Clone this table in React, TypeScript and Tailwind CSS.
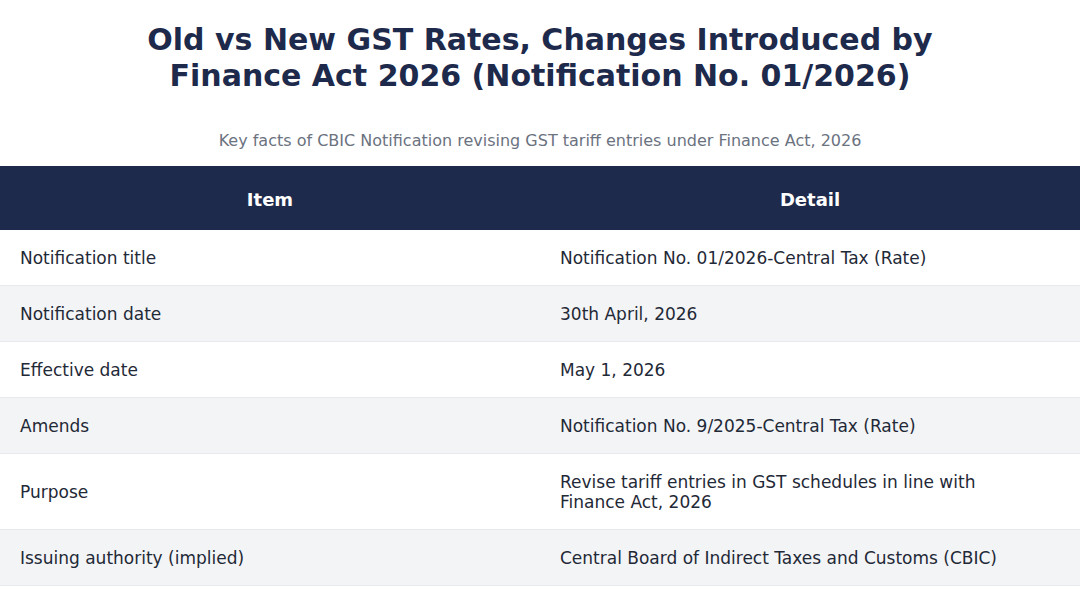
const rows: { item: string; detail: string }[] = [
  { item: "Notification title", detail: "Notification No. 01/2026-Central Tax (Rate)" },
  { item: "Notification date", detail: "30th April, 2026" },
  { item: "Effective date", detail: "May 1, 2026" },
  { item: "Amends", detail: "Notification No. 9/2025-Central Tax (Rate)" },
  { item: "Purpose", detail: "Revise tariff entries in GST schedules in line with Finance Act, 2026" },
  { item: "Issuing authority (implied)", detail: "Central Board of Indirect Taxes and Customs (CBIC)" },
];

export default function App() {
  return (
    <div className="w-[1080px] h-[596px] bg-white overflow-hidden font-['DejaVu_Sans',sans-serif]">
      <h1 className="pt-[22px] px-10 text-center text-[30px] leading-[36px] font-bold text-[#1e2a4b]">
        Old vs New GST Rates, Changes Introduced by
        <br />
        Finance Act 2026 (Notification No. 01/2026)
      </h1>

      <p className="mt-[35px] text-center text-[16px] leading-6 text-[#6b7280]">
        Key facts of CBIC Notification revising GST tariff entries under Finance Act, 2026
      </p>

      <div className="mt-[13px]">
        <div className="grid grid-cols-2 h-16 bg-[#1e2a4b] text-white font-bold text-[18px]">
          <div className="flex items-center justify-center pt-[2px]">Item</div>
          <div className="flex items-center justify-center pt-[2px]">Detail</div>
        </div>
        {rows.map(({ item, detail }, i) => (
          <div
            key={item}
            className={`grid grid-cols-2 border-b border-[#e8e9ee] text-[17px] leading-5 text-[#1f2937] ${
              i % 2 === 1 ? "bg-[#f3f4f6]" : "bg-white"
            }`}
          >
            <div className="pl-5 pr-12 py-[17.5px] flex items-center">{item}</div>
            <div className="pl-5 pr-12 py-[17.5px] flex items-center">{detail}</div>
          </div>
        ))}
      </div>
    </div>
  );
}
